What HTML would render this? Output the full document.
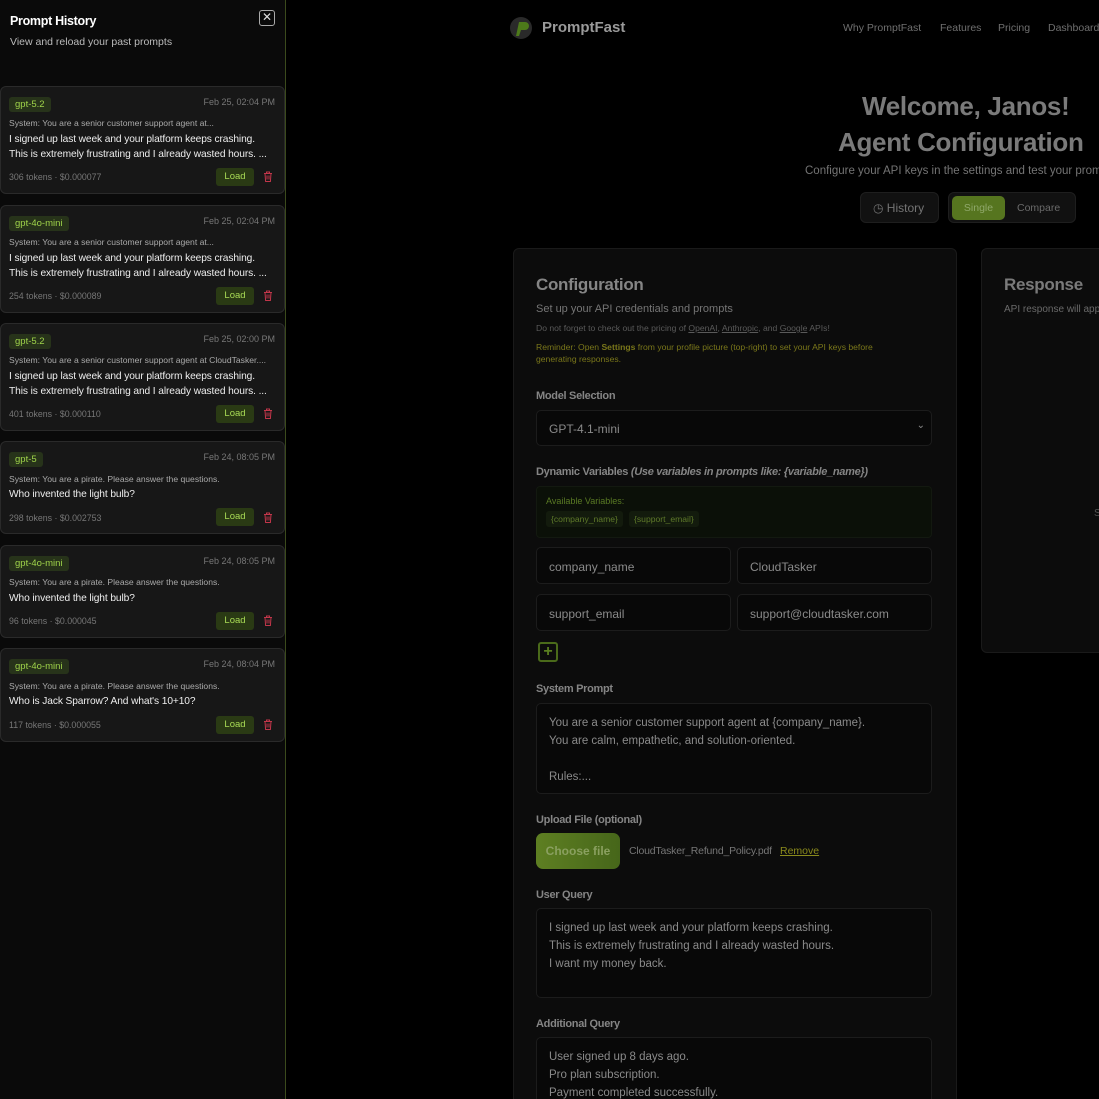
<!DOCTYPE html>
<html style="overflow:hidden;height:1099px"><head><meta charset="utf-8">
<style>
*{box-sizing:border-box;margin:0;padding:0}
html,body{overflow:hidden}
body{width:1099px;height:1099px;background:#000;font-family:"Liberation Sans",sans-serif;position:relative}
.a{position:absolute;white-space:nowrap}
#side{position:absolute;left:0;top:0;width:286px;height:1099px;background:#0a0a0a;border-right:1px solid #3b4a1c}
.card{position:absolute;left:0;width:285px;background:#171717;border:1px solid #2a2a2a;border-radius:6px}
.badge{position:absolute;left:8px;top:10px;height:15px;padding:0 6px;background:#27331a;color:#9fd34a;font-size:9.5px;line-height:15px;border-radius:3px}
.date{position:absolute;right:9px;top:10px;color:#777;font-size:9px}
.sys{position:absolute;left:8px;color:#aaa;font-size:8.6px}
.q{position:absolute;left:8px;color:#eee;font-size:10.2px;line-height:15px;letter-spacing:-.1px}
.tok{position:absolute;left:8px;color:#777;font-size:8.8px}
.load{position:absolute;left:215px;width:38px;height:18px;background:#2a3a14;color:#a9dc55;font-size:9.5px;line-height:18px;text-align:center;border-radius:3px}
.trash{position:absolute;left:262px;width:10px;height:11px}
.panel{position:absolute;background:#0c0c0c;border:1px solid #1a1a1a;border-radius:6px}
.lbl{position:absolute;left:536px;color:#858585;font-size:11px;font-weight:bold;letter-spacing:-.3px}
.inp{position:absolute;background:#080808;border:1px solid #1c1c1c;border-radius:5px;color:#8a8a8a;font-size:12px}
.inp span{position:absolute;left:12px}
.ta{position:absolute;left:536px;width:396px;background:#080808;border:1px solid #1c1c1c;border-radius:5px;color:#8a8a8a;font-size:11.5px;line-height:18px;padding:10px 12px}
</style></head><body>

<div id="side">
 <div class="a" style="left:10px;top:14px;color:#fff;font-size:12.5px;font-weight:bold;letter-spacing:-.3px">Prompt History</div>
 <div class="a" style="left:10px;top:36px;color:#bbb;font-size:10.5px">View and reload your past prompts</div>
 <div class="a" style="left:259px;top:10px;width:16px;height:16px;border:1.5px solid #aaa;border-radius:3px;color:#ddd;font-size:12px;line-height:12px;text-align:center">✕</div>
</div>

<div class="card" style="top:86px;height:108px">
 <div class="badge">gpt-5.2</div><div class="date">Feb 25, 02:04 PM</div>
 <div class="sys" style="top:31px">System: You are a senior customer support agent at...</div>
 <div class="q" style="top:45px">I signed up last week and your platform keeps crashing.<br>This is extremely frustrating and I already wasted hours. ...</div>
 <div class="tok" style="top:85px">306 tokens · $0.000077</div>
 <div class="load" style="top:81px">Load</div>
 <svg class="trash" style="top:84px" viewBox="0 0 10 11"><path d="M1 2.5h8M3.5 2.5V1h3v1.5M2 2.5l.6 8h4.8l.6-8M4 4.5v4M6 4.5v4" stroke="#c2364a" fill="none" stroke-width="1"/></svg>
</div>
<div class="card" style="top:205px;height:108px">
 <div class="badge">gpt-4o-mini</div><div class="date">Feb 25, 02:04 PM</div>
 <div class="sys" style="top:31px">System: You are a senior customer support agent at...</div>
 <div class="q" style="top:45px">I signed up last week and your platform keeps crashing.<br>This is extremely frustrating and I already wasted hours. ...</div>
 <div class="tok" style="top:85px">254 tokens · $0.000089</div>
 <div class="load" style="top:81px">Load</div>
 <svg class="trash" style="top:84px" viewBox="0 0 10 11"><path d="M1 2.5h8M3.5 2.5V1h3v1.5M2 2.5l.6 8h4.8l.6-8M4 4.5v4M6 4.5v4" stroke="#c2364a" fill="none" stroke-width="1"/></svg>
</div>
<div class="card" style="top:323px;height:108px">
 <div class="badge">gpt-5.2</div><div class="date">Feb 25, 02:00 PM</div>
 <div class="sys" style="top:31px">System: You are a senior customer support agent at CloudTasker....</div>
 <div class="q" style="top:45px">I signed up last week and your platform keeps crashing.<br>This is extremely frustrating and I already wasted hours. ...</div>
 <div class="tok" style="top:85px">401 tokens · $0.000110</div>
 <div class="load" style="top:81px">Load</div>
 <svg class="trash" style="top:84px" viewBox="0 0 10 11"><path d="M1 2.5h8M3.5 2.5V1h3v1.5M2 2.5l.6 8h4.8l.6-8M4 4.5v4M6 4.5v4" stroke="#c2364a" fill="none" stroke-width="1"/></svg>
</div>
<div class="card" style="top:441px;height:93px">
 <div class="badge">gpt-5</div><div class="date">Feb 24, 08:05 PM</div>
 <div class="sys" style="top:32px">System: You are a pirate. Please answer the questions.</div>
 <div class="q" style="top:45px">Who invented the light bulb?</div>
 <div class="tok" style="top:71px">298 tokens · $0.002753</div>
 <div class="load" style="top:66px">Load</div>
 <svg class="trash" style="top:70px" viewBox="0 0 10 11"><path d="M1 2.5h8M3.5 2.5V1h3v1.5M2 2.5l.6 8h4.8l.6-8M4 4.5v4M6 4.5v4" stroke="#c2364a" fill="none" stroke-width="1"/></svg>
</div>
<div class="card" style="top:545px;height:93px">
 <div class="badge">gpt-4o-mini</div><div class="date">Feb 24, 08:05 PM</div>
 <div class="sys" style="top:31px">System: You are a pirate. Please answer the questions.</div>
 <div class="q" style="top:45px">Who invented the light bulb?</div>
 <div class="tok" style="top:70px">96 tokens · $0.000045</div>
 <div class="load" style="top:66px">Load</div>
 <svg class="trash" style="top:69px" viewBox="0 0 10 11"><path d="M1 2.5h8M3.5 2.5V1h3v1.5M2 2.5l.6 8h4.8l.6-8M4 4.5v4M6 4.5v4" stroke="#c2364a" fill="none" stroke-width="1"/></svg>
</div>
<div class="card" style="top:648px;height:94px">
 <div class="badge">gpt-4o-mini</div><div class="date">Feb 24, 08:04 PM</div>
 <div class="sys" style="top:32px">System: You are a pirate. Please answer the questions.</div>
 <div class="q" style="top:45px">Who is Jack Sparrow? And what's 10+10?</div>
 <div class="tok" style="top:71px">117 tokens · $0.000055</div>
 <div class="load" style="top:67px">Load</div>
 <svg class="trash" style="top:70px" viewBox="0 0 10 11"><path d="M1 2.5h8M3.5 2.5V1h3v1.5M2 2.5l.6 8h4.8l.6-8M4 4.5v4M6 4.5v4" stroke="#c2364a" fill="none" stroke-width="1"/></svg>
</div>

<svg class="a" style="left:509px;top:15px" width="24" height="26" viewBox="0 0 24 26"><circle cx="12" cy="13" r="11" fill="#2a2a2a"/><path d="M7 21l3-14h6a4 4 0 010 8h-4l-2 6z" fill="#4d7a1a"/></svg>
<div class="a" style="left:542px;top:19px;color:#9a9a9a;font-size:15px;font-weight:bold">PromptFast</div>
<div class="a" style="left:843px;top:22px;color:#6f6f6f;font-size:10.5px">Why PromptFast</div>
<div class="a" style="left:940px;top:22px;color:#6f6f6f;font-size:10.5px">Features</div>
<div class="a" style="left:998px;top:22px;color:#6f6f6f;font-size:10.5px">Pricing</div>
<div class="a" style="left:1048px;top:22px;color:#6f6f6f;font-size:10.5px">Dashboard</div>

<div class="a" style="left:862px;top:91px;color:#7a7a7a;font-size:26px;font-weight:bold;letter-spacing:-.3px">Welcome, Janos!</div>
<div class="a" style="left:838px;top:127px;color:#7a7a7a;font-size:26px;font-weight:bold;letter-spacing:-.3px">Agent Configuration</div>
<div class="a" style="left:805px;top:165px;color:#747474;font-size:11.5px">Configure your API keys in the settings and test your prompts</div>
<div class="a" style="left:860px;top:192px;width:79px;height:31px;background:#111;border:1px solid #1e1e1e;border-radius:6px;color:#747474;font-size:12px;line-height:30px;padding-left:12px">◷ History</div>
<div class="a" style="left:948px;top:192px;width:128px;height:31px;background:#111;border:1px solid #1e1e1e;border-radius:6px"></div>
<div class="a" style="left:952px;top:196px;width:53px;height:24px;background:#56751f;border-radius:5px;color:#8fa86a;font-size:10.5px;line-height:24px;text-align:center">Single</div>
<div class="a" style="left:1017px;top:202px;color:#6a6a6a;font-size:10.5px">Compare</div>

<div class="panel" style="left:513px;top:248px;width:444px;height:860px"></div>
<div class="panel" style="left:981px;top:248px;width:140px;height:405px"></div>
<div class="a" style="left:1004px;top:275px;color:#7a7a7a;font-size:17px;font-weight:bold;letter-spacing:-.3px">Response</div>
<div class="a" style="left:1004px;top:304px;color:#6a6a6a;font-size:10px">API response will appear here</div>
<div class="a" style="left:1094px;top:508px;color:#555;font-size:10px">S</div>

<div class="a" style="left:536px;top:275px;color:#858585;font-size:17px;font-weight:bold;letter-spacing:-.3px">Configuration</div>
<div class="a" style="left:536px;top:303px;color:#757575;font-size:11px">Set up your API credentials and prompts</div>
<div class="a" style="left:536px;top:323px;color:#5a5a5a;font-size:8.6px">Do not forget to check out the pricing of <u>OpenAI</u>, <u>Anthropic</u>, and <u>Google</u> APIs!</div>
<div class="a" style="left:536px;top:341px;color:#7a771a;font-size:8.6px;line-height:12px">Reminder: Open <b>Settings</b> from your profile picture (top-right) to set your API keys before<br>generating responses.</div>

<div class="lbl" style="top:390px">Model Selection</div>
<div class="inp" style="left:536px;top:410px;width:396px;height:36px"><span style="top:11px">GPT-4.1-mini</span><span style="left:auto;right:6px;top:9px;font-size:10px">⌄</span></div>

<div class="lbl" style="top:466px">Dynamic Variables <i>(Use variables in prompts like: {variable_name})</i></div>
<div class="a" style="left:536px;top:486px;width:396px;height:52px;background:#0b1008;border:1px solid #131910;border-radius:4px"></div>
<div class="a" style="left:546px;top:496px;color:#5a7a24;font-size:9px">Available Variables:</div>
<div class="a" style="left:546px;top:511px;height:16px;padding:0 5px;background:#131b0d;color:#5f7a2a;font-size:8.6px;line-height:16px;border-radius:3px">{company_name}</div>
<div class="a" style="left:629px;top:511px;height:16px;padding:0 5px;background:#131b0d;color:#5f7a2a;font-size:8.6px;line-height:16px;border-radius:3px">{support_email}</div>

<div class="inp" style="left:536px;top:547px;width:195px;height:37px"><span style="top:12px">company_name</span></div>
<div class="inp" style="left:737px;top:547px;width:195px;height:37px"><span style="top:12px">CloudTasker</span></div>
<div class="inp" style="left:536px;top:594px;width:195px;height:37px"><span style="top:12px">support_email</span></div>
<div class="inp" style="left:737px;top:594px;width:195px;height:37px"><span style="top:12px">support@cloudtasker.com</span></div>
<div class="a" style="left:538px;top:642px;width:20px;height:20px;border:2px solid #4a6a1a;border-radius:3px;color:#5a7f20;font-size:16px;line-height:15px;text-align:center;font-weight:bold">+</div>

<div class="lbl" style="top:683px">System Prompt</div>
<div class="ta" style="top:703px;height:91px">You are a senior customer support agent at {company_name}.<br>You are calm, empathetic, and solution-oriented.<br><br>Rules:...</div>

<div class="lbl" style="top:814px">Upload File (optional)</div>
<div class="a" style="left:536px;top:833px;width:84px;height:36px;background:linear-gradient(90deg,#5e7f22,#46661a);border-radius:7px;color:#8aa060;font-size:12px;font-weight:bold;line-height:36px;text-align:center">Choose file</div>
<div class="a" style="left:629px;top:845px;color:#767676;font-size:10.5px;letter-spacing:-.2px">CloudTasker_Refund_Policy.pdf</div>
<div class="a" style="left:780px;top:845px;color:#8a8a1c;font-size:10.5px;text-decoration:underline">Remove</div>

<div class="lbl" style="top:889px">User Query</div>
<div class="ta" style="top:908px;height:90px">I signed up last week and your platform keeps crashing.<br>This is extremely frustrating and I already wasted hours.<br>I want my money back.</div>

<div class="lbl" style="top:1018px">Additional Query</div>
<div class="ta" style="top:1037px;height:90px">User signed up 8 days ago.<br>Pro plan subscription.<br>Payment completed successfully.</div>

</body></html>
